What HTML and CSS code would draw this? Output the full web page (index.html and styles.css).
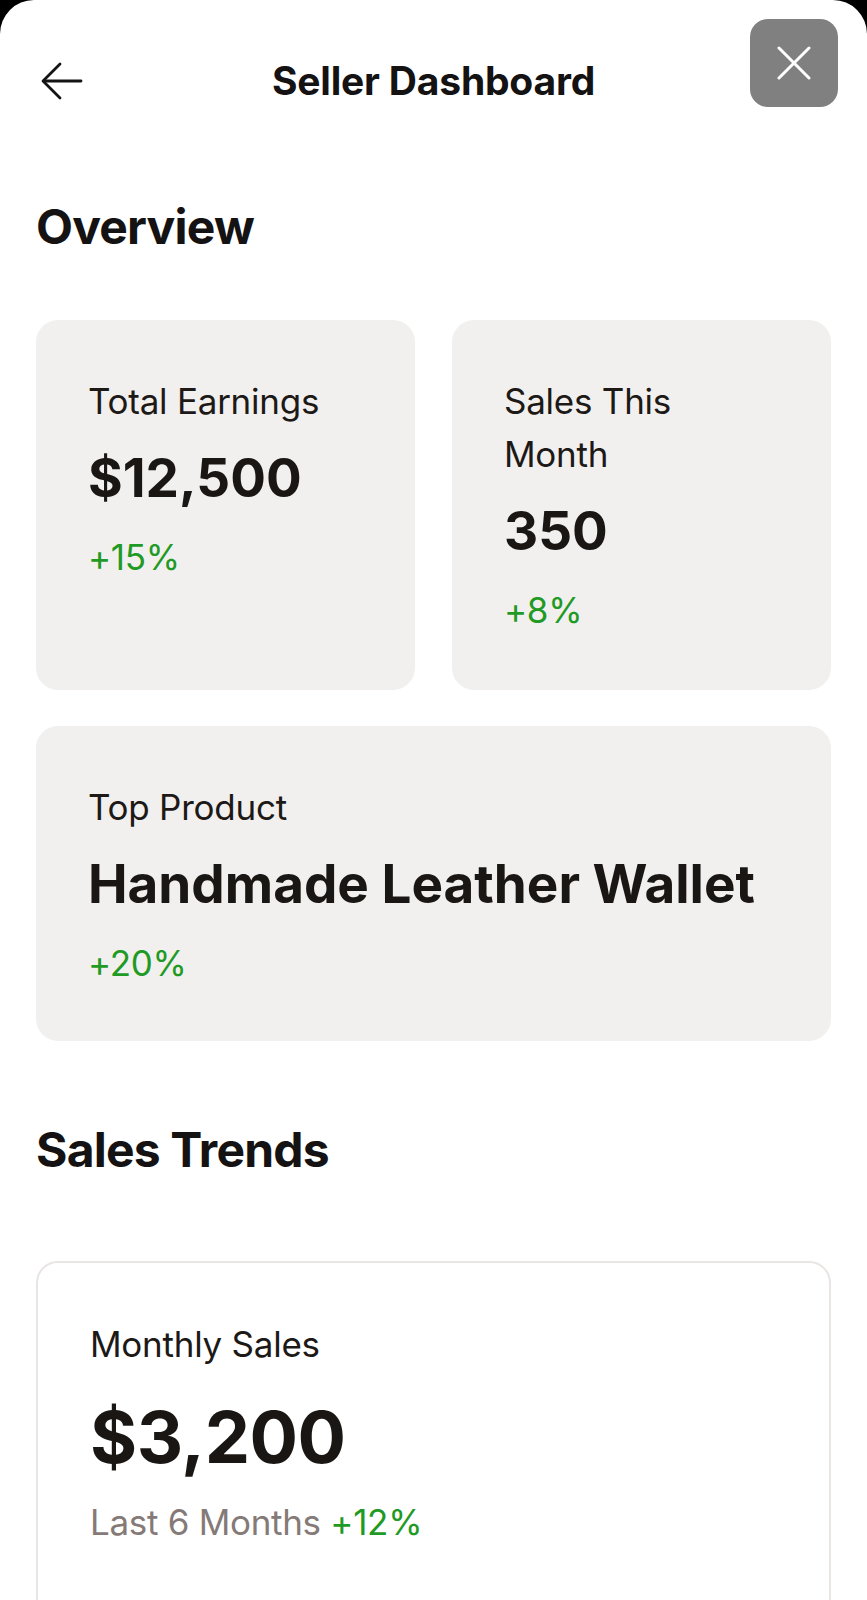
FILE: index.html
```html
<!DOCTYPE html>
<html lang="en">
<head>
<meta charset="utf-8">
<title>Seller Dashboard</title>
<link rel="stylesheet" href="styles.css">
</head>
<body>
<div class="sheet">
  <header class="topbar">
    <button class="back" aria-label="Back">
      <svg width="42" height="38" viewBox="0 0 42 38" fill="none" stroke="#141414" stroke-width="2.8" stroke-linecap="round" stroke-linejoin="round">
        <path d="M40 19H3"/>
        <path d="M19 2L2 19L19 36"/>
      </svg>
    </button>
    <h1 class="title">Seller Dashboard</h1>
    <span class="spacer"></span>
  </header>

  <button class="close" aria-label="Close">
    <svg width="34" height="34" viewBox="0 0 34 34" stroke="#ffffff" stroke-width="3" stroke-linecap="round">
      <path d="M2 2L32 32M32 2L2 32"/>
    </svg>
  </button>

  <main class="content">
    <h2 class="section-title overview">Overview</h2>

    <div class="stats-grid">
      <div class="card">
        <div class="label">Total Earnings</div>
        <div class="value">$12,500</div>
        <div class="change">+15%</div>
      </div>
      <div class="card">
        <div class="label">Sales This<br>Month</div>
        <div class="value">350</div>
        <div class="change">+8%</div>
      </div>
    </div>

    <div class="card wide">
      <div class="label">Top Product</div>
      <div class="value">Handmade Leather Wallet</div>
      <div class="change">+20%</div>
    </div>

    <h2 class="section-title trends">Sales Trends</h2>

    <div class="card outline">
      <div class="label">Monthly Sales</div>
      <div class="big-value">$3,200</div>
      <div class="sub"><span class="muted">Last 6 Months</span> <span class="change-inline">+12%</span></div>
    </div>
  </main>
</div>
</body>
</html>
```

FILE: styles.css
```css
* {
  box-sizing: border-box;
}

html, body {
  margin: 0;
  padding: 0;
  background: #000000;
}

body {
  font-family: Inter, "Noto Sans", "Liberation Sans", sans-serif;
  color: #1a1614;
}

.sheet {
  position: relative;
  background: #ffffff;
  border-radius: 34px 34px 0 0;
  min-height: 1600px;
  overflow: hidden;
}

.topbar {
  display: flex;
  align-items: center;
  justify-content: space-between;
  height: 64px;
  margin-top: 49px;
  padding: 0 40px 0 40px;
}

.back {
  display: flex;
  align-items: center;
  justify-content: center;
  width: 44px;
  height: 44px;
  padding: 0;
  border: 0;
  background: transparent;
}

.title {
  margin: 0;
  font-size: 39px;
  font-weight: 700;
  letter-spacing: -0.2px;
  color: #141212;
  line-height: 64px;
}

.spacer {
  width: 44px;
}

.close {
  position: absolute;
  top: 19px;
  right: 29px;
  width: 88px;
  height: 88px;
  border: 0;
  border-radius: 18px;
  background: #808080;
  display: flex;
  align-items: center;
  justify-content: center;
  padding: 0;
}

.content {
  padding: 0 36px;
}

.section-title {
  margin: 0;
  font-size: 48px;
  font-weight: 700;
  letter-spacing: -0.8px;
  line-height: 60px;
  color: #141212;
}

.overview {
  margin-top: 84px;
  margin-bottom: 63px;
}

.trends {
  margin-top: 79px;
  margin-bottom: 81px;
}

.stats-grid {
  display: grid;
  grid-template-columns: 1fr 1fr;
  gap: 37px;
  margin-bottom: 36px;
}

.card {
  background: #f2f0ef;
  border-radius: 22px;
  padding: 55px 52px 53px;
}

.wide {
  padding-bottom: 51px;
}

.label {
  font-size: 35px;
  line-height: 53px;
  font-weight: 400;
  letter-spacing: -0.25px;
  color: #1c1917;
}

.value {
  margin-top: 17px;
  font-size: 53px;
  line-height: 66px;
  font-weight: 700;
  letter-spacing: 0;
  color: #1a1614;
}

.change {
  margin-top: 20px;
  font-size: 35px;
  line-height: 53px;
  color: #1f9a24;
  letter-spacing: -0.3px;
}

.outline {
  background: #ffffff;
  border: 2px solid #e8e5e3;
  min-height: 400px;
}

.big-value {
  margin-top: 22px;
  font-size: 72px;
  line-height: 88px;
  font-weight: 700;
  letter-spacing: -0.5px;
  color: #1a1614;
}

.sub {
  margin-top: 15px;
  font-size: 35px;
  line-height: 53px;
  letter-spacing: -0.3px;
}

.muted {
  color: #857a77;
}

.change-inline {
  color: #1f9a24;
}
```
